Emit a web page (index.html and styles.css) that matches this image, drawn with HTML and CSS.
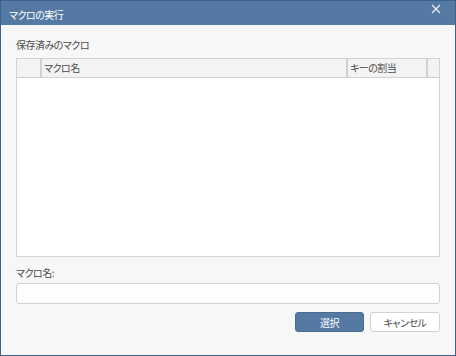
FILE: index.html
```html
<!DOCTYPE html>
<html lang="ja">
<head>
  <meta charset="UTF-8">
  <title>マクロの実行</title>
  <link rel="stylesheet" href="styles.css">
</head>
<body>

  <div class="dialog">
    <!-- Title bar -->
    <div class="titlebar">
      <span class="title">マクロの実行</span>
      <svg class="close" width="10" height="10" viewBox="0 0 10 10">
        <path d="M1 1 L9 9 M9 1 L1 9" stroke="#e6ecf3" stroke-width="1.3" fill="none"/>
      </svg>
    </div>

    <div class="content">
      <div class="label">保存済みのマクロ</div>

      <!-- Macro list -->
      <div class="macro-table">
        <div class="table-head">
          <div class="cell cell-check"></div>
          <div class="cell cell-name">マクロ名</div>
          <div class="cell cell-key">キーの割当</div>
          <div class="cell cell-scroll"></div>
        </div>
        <div class="table-body"></div>
      </div>

      <div class="label label-name">マクロ名:</div>
      <input class="name-input" type="text">

      <div class="buttons">
        <button class="btn btn-primary">選択</button>
        <button class="btn">キャンセル</button>
      </div>
    </div>
  </div>

</body>
</html>
```

FILE: styles.css
```css
:root {
  --title-color: #5479a3;
  --border-color: #3f6188;
  --panel-bg: #f7f7f7;
  --line-color: #d2d2d2;
  --text-color: #4a4a4a;
}

body {
  margin: 0;
  font-family: "Noto Sans CJK JP", "Noto Sans", sans-serif;
  font-size: 10px;
  letter-spacing: -0.5px;
  font-feature-settings: "palt";
  color: var(--text-color);
}

.dialog {
  width: 456px;
  height: 356px;
  box-sizing: border-box;
  border: 1px solid var(--border-color);
  background: var(--panel-bg);
  display: flex;
  flex-direction: column;
}

.titlebar {
  height: 24px;
  background: var(--title-color);
  display: flex;
  align-items: center;
  justify-content: space-between;
  padding: 0 14px 0 8px;
  color: #fff;
}

.title {
  margin-top: 4px;
  line-height: 16px;
}

.close {
  margin-top: -8px;
}

.content {
  padding: 12px 15px 0 15px;
  display: flex;
  flex-direction: column;
}

.label {
  line-height: 16px;
  height: 16px;
}

.macro-table {
  margin-top: 5px;
  height: 199px;
  box-sizing: border-box;
  border: 1px solid var(--line-color);
  background: #fff;
  display: flex;
  flex-direction: column;
}

.table-head {
  height: 18px;
  display: flex;
  background: #f3f3f3;
  border-bottom: 1px solid var(--line-color);
}

.cell {
  line-height: 18px;
  box-sizing: border-box;
  border-right: 2px solid var(--line-color);
  padding-left: 2px;
  white-space: nowrap;
}

.cell-check {
  width: 25px;
}

.cell-name {
  width: 306px;
}

.cell-key {
  width: 80px;
}

.cell-scroll {
  flex: 1;
  border-right: none;
}

.table-body {
  flex: 1;
}

.label-name {
  margin-top: 8px;
}

.name-input {
  margin: 2px 0 0 0;
  height: 21px;
  box-sizing: border-box;
  border: 1px solid var(--line-color);
  border-radius: 3px;
  background: #fdfdfd;
  outline: none;
}

.buttons {
  margin-top: 8px;
  display: flex;
  justify-content: flex-end;
  gap: 6px;
}

.btn {
  width: 70px;
  height: 20px;
  box-sizing: border-box;
  padding: 0;
  font-family: inherit;
  font-size: 10px;
  letter-spacing: -0.5px;
  font-feature-settings: "palt";
  color: var(--text-color);
  background: #fff;
  border: 1px solid var(--line-color);
  border-radius: 3px;
}

.btn-primary {
  width: 69px;
  background: var(--title-color);
  border-color: #4a6c93;
  color: #fff;
}
```
